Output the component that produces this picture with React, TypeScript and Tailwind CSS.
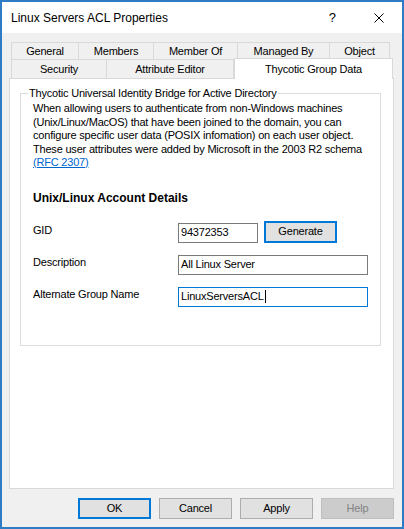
import React from 'react';

const font = { fontFamily: '"Liberation Sans", Arial, sans-serif' };

const topTabs = [
  { label: 'General', w: 'w-[68px]' },
  { label: 'Members', w: 'w-[75px]' },
  { label: 'Member Of', w: 'w-[84px]' },
  { label: 'Managed By', w: 'w-[92px]' },
  { label: 'Object', w: 'w-[60px]' },
];

const Field = ({ value, focused, className = '' }: { value: string; focused?: boolean; className?: string }) => (
  <div
    className={`h-[20px] bg-white border flex items-center pl-[2px] text-[11px] text-black ${
      focused ? 'border-[#0078d7]' : 'border-[#7a7a7a]'
    } ${className}`}
  >
    <span>{value}</span>
    {focused && <span className="w-px h-[13px] bg-black ml-[1px]" />}
  </div>
);

const DialogButton = ({ label, focused, disabled }: { label: string; focused?: boolean; disabled?: boolean }) => (
  <button
    disabled={disabled}
    className={`w-[73px] h-[21px] text-[11px] flex items-center justify-center ${
      focused
        ? 'border-2 border-[#0078d7] bg-[#e1e1e1] text-black'
        : disabled
        ? 'border border-[#bfbfbf] bg-[#cccccc] text-[#838383]'
        : 'border border-[#adadad] bg-[#e1e1e1] text-black'
    }`}
  >
    {label}
  </button>
);

export default function App() {
  return (
    <div
      style={font}
      className="w-[404px] h-[529px] border-2 border-[#2f7cc4] bg-[#f0f0f0] flex flex-col text-[11px] text-black tracking-[-0.2px]"
    >
      {/* Title bar */}
      <div className="h-[31px] bg-white flex items-center pl-[9px] shrink-0 tracking-normal">
        <span className="text-[12px] flex-1">Linux Servers ACL Properties</span>
        <span className="text-[13px] mr-[38px]">?</span>
        <svg width="10" height="10" viewBox="0 0 10 10" className="mr-[18px]">
          <path d="M0.5 0.5 L9.5 9.5 M9.5 0.5 L0.5 9.5" stroke="#000" strokeWidth="1" />
        </svg>
      </div>

      {/* Body */}
      <div className="flex-1 flex flex-col pt-[9px] pl-[7px] pr-[8px] pb-[8px]">
        {/* Tabs */}
        <div className="pl-[2px]">
          <div className="flex h-[17px]">
            {topTabs.map((t, i) => (
              <div
                key={t.label}
                className={`${t.w} h-full border-t border-r border-[#d9d9d9] bg-[#f0f0f0] flex items-center justify-center ${
                  i === 0 ? 'border-l' : ''
                }`}
              >
                {t.label}
              </div>
            ))}
          </div>
          <div className="flex h-[19px] items-start">
            <div className="w-[96px] h-full border-t border-l border-r border-[#d9d9d9] flex items-center justify-center">
              Security
            </div>
            <div className="w-[127px] h-full border-t border-r border-[#d9d9d9] flex items-center justify-center">
              Attribute Editor
            </div>
            <div className="relative z-10 w-[159px] h-[21px] -mt-[1px] bg-white border-t border-l border-r border-[#d9d9d9] flex items-center justify-center">
              Thycotic Group Data
            </div>
          </div>
        </div>

        {/* Tab panel */}
        <div className="h-[411px] bg-white border border-[#d9d9d9] pl-[10px] pr-[12px] pt-[7px]">
          <fieldset className="border border-[#dcdcdc] pl-[12px] pr-[4px] pb-[38px]">
            <legend className="-ml-[5px] px-[1px] leading-[14px]">
              Thycotic Universal Identity Bridge for Active Directory
            </legend>
            <p className="mt-[2px] leading-[13.5px] whitespace-nowrap">
              When allowing users to authenticate from non-Windows machines
              <br />
              (Unix/Linux/MacOS) that have been joined to the domain, you can
              <br />
              configure specific user data (POSIX infomation) on each user object.
              <br />
              These user attributes were added by Microsoft in the 2003 R2 schema
              <br />
              <a className="text-[#0066cc] underline" href="#">
                (RFC 2307)
              </a>
            </p>

            <h3 className="mt-[21px] font-bold text-[12px] leading-[14px] tracking-normal">
              Unix/Linux Account Details
            </h3>

            <div className="mt-[16px] flex items-start">
              <span className="w-[145px] mt-[2px] leading-[14px]">GID</span>
              <Field value="94372353" className="w-[80px] mt-[2px]" />
              <button className="ml-[6px] w-[73px] h-[22px] border-2 border-[#0078d7] bg-[#e1e1e1] text-[11px]">
                Generate
              </button>
            </div>

            <div className="mt-[12px] flex items-start">
              <span className="w-[145px] leading-[14px]">Description</span>
              <Field value="All Linux Server" className="w-[190px]" />
            </div>

            <div className="mt-[12px] flex items-start">
              <span className="w-[145px] leading-[14px]">Alternate Group Name</span>
              <Field value="LinuxServersACL" focused className="w-[190px]" />
            </div>
          </fieldset>
        </div>

        {/* Dialog buttons */}
        <div className="mt-[9px] flex justify-end gap-[8px]">
          <DialogButton label="OK" focused />
          <DialogButton label="Cancel" />
          <DialogButton label="Apply" />
          <DialogButton label="Help" disabled />
        </div>
      </div>
    </div>
  );
}
